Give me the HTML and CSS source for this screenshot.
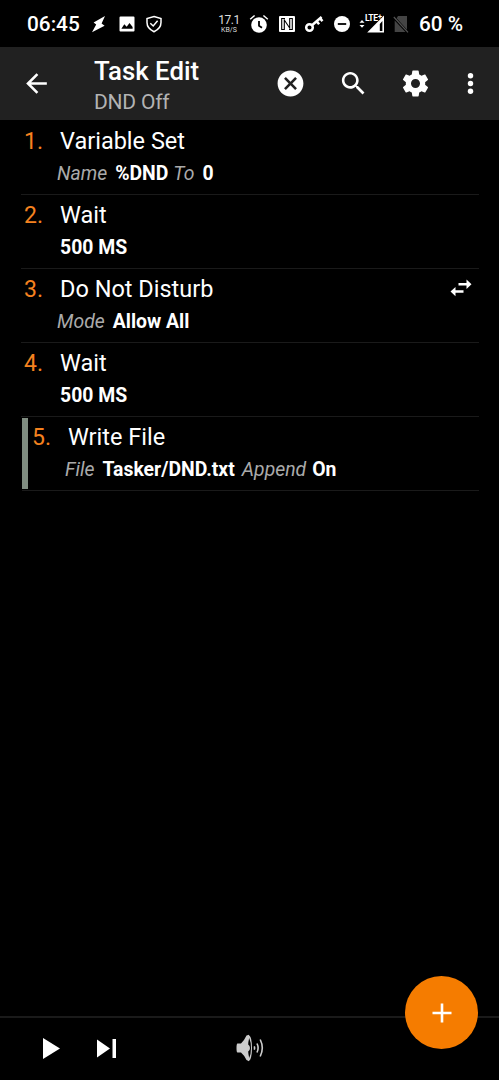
FILE: index.html
```html
<!DOCTYPE html>
<html lang="en">
<head>
  <meta charset="UTF-8">
  <meta name="viewport" content="width=device-width, initial-scale=1.0">
  <title>Task Edit</title>
  <link rel="stylesheet" href="styles.css">
</head>
<body>
  <div class="status-bar">
    <span class="clock">06:45</span>
    <svg class="bolt" width="16" height="18" viewBox="0 0 16 18"><path d="M14 1 2.6 7.6 5.2 9.6 1 17.2 13.6 10.8 10.6 8.6Z"/></svg>
    <svg class="photo" width="16" height="16" viewBox="0 0 16 16"><path fill-rule="evenodd" d="M1.5 0.5h13q1 0 1 1v13q0 1-1 1h-13q-1 0-1-1v-13q0-1 1-1zM2.4 12.7h11.2V11l-3.1-4-2.8 3.7-2.4-2.4z"/></svg>
    <svg class="shield" width="18" height="18" viewBox="0 0 18 18"><path class="line" d="M9 1.5 16 3.6V7.5Q16 13.5 9 16.7 2 13.5 2 7.5V3.6ZM5.3 8.3 8.2 11 12.6 5.8"/></svg>
    <div class="speed">
      <span class="speed-value">17.1</span>
      <span class="speed-unit">KB/S</span>
    </div>
    <svg class="alarm" width="20" height="20" viewBox="0 0 20 20"><circle cx="10" cy="11" r="7.8"/><path class="line" d="M1.2 5.2 5.6 1.5M18.8 5.2 14.4 1.5"/><path class="cut" d="M10 7v4.7l3 2"/></svg>
    <svg class="nfc" width="16" height="16" viewBox="0 0 16 16"><rect width="16" height="16" rx="1"/><path class="cut" d="M6 2.5H2.7v11h2.6V4L10.7 12V2.500h2.600v11H10"/></svg>
    <svg class="key" width="20" height="18" viewBox="0 0 20 18"><circle class="thick" cx="5.5" cy="12.5" r="3.3"/><path class="thick" d="M8 10.2 17.6 2M12.6 6.3l2.5 3M16 3.4l2.5 2.8"/></svg>
    <svg class="dnd" width="16" height="16" viewBox="0 0 16 16"><circle cx="8" cy="8" r="8"/><path class="cut" d="M3.8 8h8.4"/></svg>
    <div class="signal">
      <svg width="26" height="18" viewBox="0 0 26 18"><path d="M0.5 7.7 3 5 5.5 7.7ZM0.5 10 3 12.7 5.5 10Z"/><path fill-rule="evenodd" d="M25 0.5v17H8.2zM20.8 9V16h2.6V6z"/></svg>
      <span class="lte">LTE<sup>+</sup></span>
    </div>
    <svg class="no-sim" width="16" height="18" viewBox="0 0 16 18"><path d="M5 1h9v13.7L3.6 3.2zM1.7 5.4 12.5 17H1.7z"/><path class="slash" d="M0.8 2 15 17.3"/></svg>
    <span class="battery">60 %</span>
  </div>

  <div class="toolbar">
    <svg class="icon back" viewBox="0 0 24 24"><path d="M20 11H7.83l5.59-5.59L12 4l-8 8 8 8 1.41-1.41L7.83 13H20v-2z"/></svg>
    <div class="titles">
      <h1>Task Edit</h1>
      <h2>DND Off</h2>
    </div>
    <svg class="icon cancel" viewBox="0 0 24 24"><path d="M12 2C6.47 2 2 6.47 2 12s4.47 10 10 10 10-4.47 10-10S17.53 2 12 2zm5 13.59L15.59 17 12 13.41 8.41 17 7 15.59 10.59 12 7 8.41 8.41 7 12 10.59 15.59 7 17 8.41 13.41 12 17 15.59z"/></svg>
    <svg class="icon search" viewBox="0 0 24 24"><path d="M15.5 14h-.79l-.28-.27C15.41 12.59 16 11.11 16 9.5 16 5.91 13.09 3 9.5 3S3 5.91 3 9.5 5.91 16 9.5 16c1.61 0 3.09-.59 4.23-1.57l.27.28v.79l5 4.99L20.49 19l-4.99-5zm-6 0C7.01 14 5 11.99 5 9.5S7.01 5 9.5 5 14 7.01 14 9.5 11.99 14 9.5 14z"/></svg>
    <svg class="icon settings" viewBox="0 0 24 24"><path d="M19.43 12.98c.04-.32.07-.64.07-.98s-.03-.66-.07-.98l2.11-1.65c.19-.15.24-.42.12-.64l-2-3.46c-.12-.22-.39-.3-.61-.22l-2.49 1c-.52-.4-1.08-.73-1.69-.98l-.38-2.65C14.46 2.18 14.25 2 14 2h-4c-.25 0-.46.18-.49.42l-.38 2.65c-.61.25-1.17.59-1.69.98l-2.49-1c-.23-.09-.49 0-.61.22l-2 3.46c-.13.22-.07.49.12.64l2.11 1.65c-.04.32-.07.65-.07.98s.03.66.07.98l-2.11 1.65c-.19.15-.24.42-.12.64l2 3.46c.12.22.39.3.61.22l2.49-1c.52.4 1.08.73 1.69.98l.38 2.65c.03.24.24.42.49.42h4c.25 0 .46-.18.49-.42l.38-2.65c.61-.25 1.17-.59 1.69-.98l2.49 1c.23.09.49 0 .61-.22l2-3.46c.12-.22.07-.49-.12-.64l-2.11-1.65zM12 15.5c-1.93 0-3.5-1.57-3.5-3.5s1.57-3.5 3.5-3.5 3.5 1.57 3.5 3.5-1.57 3.5-3.5 3.5z"/></svg>
    <svg class="icon more" viewBox="0 0 24 24"><circle cx="12" cy="6" r="2.1"/><circle cx="12" cy="12" r="2.1"/><circle cx="12" cy="18" r="2.1"/></svg>
  </div>

  <div class="actions">
    <div class="action">
      <span class="number">1.</span>
      <div class="info">
        <p class="name">Variable Set</p>
        <p class="args"><i>Name</i><b>%DND</b><i>To</i><b>0</b></p>
      </div>
    </div>
    <div class="action">
      <span class="number">2.</span>
      <div class="info">
        <p class="name">Wait</p>
        <p class="args plain"><b>500 MS</b></p>
      </div>
    </div>
    <div class="action">
      <span class="number">3.</span>
      <div class="info">
        <p class="name">Do Not Disturb</p>
        <p class="args"><i>Mode</i><b>Allow All</b></p>
      </div>
      <svg class="swap" width="22" height="18" viewBox="0 0 22 18"><path d="M8.5 4h8V0.5L21.5 5.3l-5 4.7V6.6h-8zM13.5 11.2h-8V7.9L0.5 12.6l5 4.7V13.8h8z"/></svg>
    </div>
    <div class="action">
      <span class="number">4.</span>
      <div class="info">
        <p class="name">Wait</p>
        <p class="args plain"><b>500 MS</b></p>
      </div>
    </div>
    <div class="action selected">
      <span class="number">5.</span>
      <div class="info">
        <p class="name">Write File</p>
        <p class="args"><i>File</i><b class="path">Tasker/DND.txt</b><i class="close">Append</i><b>On</b></p>
      </div>
    </div>
  </div>

  <div class="bottom-bar">
    <svg class="play" width="17" height="21" viewBox="0 0 17 21"><path d="M0 0v21l17-10.5z"/></svg>
    <svg class="step" width="19" height="19" viewBox="0 0 19 19"><path d="M0 0.5v18l13-9zM15.5 0H19v19h-3.5z"/></svg>
    <svg class="speaker" width="28" height="28" viewBox="0 0 28 28"><path d="M1.5 9.5H5Q8.5 6 10.5 1.5L13 0.8V27.2L10.5 26Q8.5 21.5 5 18.5H1.5Q0.5 18.5 0.5 14T1.5 9.5Z"/><ellipse cx="13" cy="14" rx="3" ry="12.6"/><path class="horn" d="M13.2 4Q15 8 15 14T13.2 24Q12.2 20 12.2 17.5 14 16.5 14 14T12.2 10.5Q12.2 8 13.2 4Z"/><path class="wave" d="M18.2 12.3q0.8 1.7 0 3.4M21 9.5q2.2 4.5 0 9M24.2 5.5q4.2 8.5 0 17"/></svg>
    <div class="add">
      <svg width="20" height="20" viewBox="0 0 20 20"><path d="M8.7 0.5h2.6v8.2h8.2v2.6h-8.2v8.2H8.7v-8.2H0.5V8.7h8.2z"/></svg>
    </div>
  </div>
</body>
</html>
```

FILE: styles.css
```css
* {
  box-sizing: border-box;
}
body {
  font-family: Roboto, "Liberation Sans", sans-serif;
  background: #000;
  color: #fff;
  margin: 0;
  height: 100vh;
  display: flex;
  flex-direction: column;
  overflow: hidden;
}
h1, h2, p {
  margin: 0;
  font-weight: 400;
}
svg {
  display: block;
  flex: none;
  fill: #fff;
}
.status-bar {
  height: 47px;
  padding-left: 27px;
  display: flex;
  align-items: center;
  flex: none;
  white-space: nowrap;
}
.clock, .battery {
  font-size: 20.8px;
  font-weight: 500;
  line-height: 24px;
}
.clock {
  width: 64px;
}
.battery {
  margin-left: 10px;
}
.line {
  fill: none;
  stroke: #fff;
  stroke-width: 1.5;
}
.thick {
  fill: none;
  stroke: #fff;
  stroke-width: 2.5;
}
.cut {
  fill: none;
  stroke: #000;
  stroke-width: 1.8;
}
.nfc .cut {
  stroke-width: 1.1;
}
.photo {
  margin-left: 12px;
}
.shield {
  margin-left: 10px;
}
.speed {
  width: 40px;
  margin-left: 46px;
  padding-top: 2px;
  display: flex;
  flex-direction: column;
  align-items: center;
  color: #ddd;
}
.speed-value {
  font-size: 12px;
  line-height: 12px;
  letter-spacing: -0.5px;
}
.speed-unit {
  font-size: 7px;
  line-height: 9px;
}
.nfc {
  margin-left: 10px;
}
.key {
  margin-left: 9px;
}
.dnd {
  margin-left: 10px;
}
.signal {
  position: relative;
  margin-left: 9px;
}
.lte {
  position: absolute;
  left: 6px;
  top: -1px;
  font-size: 8.5px;
  font-weight: 700;
  line-height: 8px;
  letter-spacing: -0.3px;
}
.lte sup {
  font-size: 8px;
  line-height: 0;
  vertical-align: 2px;
}
.no-sim {
  margin-left: 8px;
  fill: #444;
}
.slash {
  stroke: #555;
  stroke-width: 1.2;
}
.toolbar {
  height: 73px;
  background: #212121;
  display: flex;
  align-items: center;
  flex: none;
}
.icon {
  width: 31px;
  height: 31px;
}
.back {
  margin-left: 21px;
}
.titles {
  width: 181px;
  margin-left: 42px;
  padding-top: 5px;
}
.titles h1 {
  font-size: 25.8px;
  font-weight: 500;
  line-height: 31px;
}
.titles h2 {
  font-size: 21px;
  line-height: 30px;
  letter-spacing: -0.2px;
  color: #b3b3b3;
}
.search {
  margin-left: 32px;
}
.settings {
  margin-left: 31px;
}
.more {
  margin-left: 24px;
}
.actions {
  padding: 1px 20px 0 21px;
  flex: 1;
}
.action {
  height: 74px;
  padding-left: 3px;
  border-bottom: 1px solid #1a1a1a;
  display: flex;
}
.number {
  width: 36px;
  font-size: 23px;
  line-height: 42px;
  color: #f5821f;
}
.info {
  flex: 1;
}
.name {
  font-size: 23.5px;
  line-height: 40px;
}
.args {
  margin-left: -3px;
  font-size: 19.4px;
  line-height: 26px;
  display: flex;
}
.args.plain {
  margin-left: 0;
}
.args i {
  color: #aaa;
  margin-right: 8px;
}
.args i.close {
  margin-right: 6px;
}
.args b {
  margin-right: 5px;
}
.args b.path {
  margin-right: 7px;
}
.swap {
  margin: 10px 7px 0 0;
}
.selected {
  position: relative;
  margin-left: 1px;
  padding-left: 10px;
}
.selected::before {
  content: "";
  position: absolute;
  left: 0;
  top: 1px;
  bottom: 1px;
  width: 6px;
  background: #7f8c80;
}
.bottom-bar {
  position: relative;
  height: 64px;
  padding-bottom: 2px;
  border-top: 2px solid #1a1a1a;
  display: flex;
  align-items: center;
  flex: none;
}
.play {
  margin-left: 43px;
}
.step {
  margin-left: 37px;
}
.speaker {
  margin-left: 120px;
  fill: #ccc;
}
.horn {
  fill: #000;
}
.wave {
  fill: none;
  stroke: #ccc;
  stroke-width: 1.6;
}
.add {
  position: absolute;
  right: 21px;
  top: -42px;
  width: 73px;
  height: 73px;
  border-radius: 50%;
  background: #f57c00;
  display: flex;
  align-items: center;
  justify-content: center;
}
```
